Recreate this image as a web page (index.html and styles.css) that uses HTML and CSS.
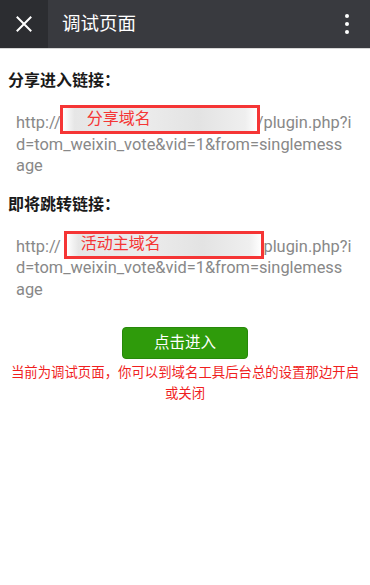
FILE: index.html
```html
<!DOCTYPE html>
<html lang="zh-CN">
<head>
    <meta charset="UTF-8">
    <meta name="viewport" content="width=device-width, initial-scale=1.0">
    <title>调试页面</title>
    <link rel="stylesheet" href="styles.css">
</head>
<body>
    <header class="top-bar">
        <div class="close-btn">
            <svg width="16" height="16" viewBox="0 0 16 16">
                <path d="M1.5 1.5 L14.5 14.5 M14.5 1.5 L1.5 14.5" stroke="#fff" stroke-width="2" stroke-linecap="square"/>
            </svg>
        </div>
        <h1 class="top-title">调试页面</h1>
        <div class="more-btn">
            <span class="dot"></span>
            <span class="dot"></span>
            <span class="dot"></span>
        </div>
    </header>

    <main class="content">
        <h2 class="section-title">分享进入链接：</h2>
        <div class="link-text">
            <div class="link-line">http://<span class="mask"><span class="mask-box mask-box--share"><span class="mask-label">分享域名</span></span></span>/plugin.php?i</div>
            <div class="link-line">d=tom_weixin_vote&amp;vid=1&amp;from=singlemess</div>
            <div class="link-line">age</div>
        </div>

        <h2 class="section-title section-title--next">即将跳转链接：</h2>
        <div class="link-text">
            <div class="link-line">http://<span class="mask"><span class="mask-box mask-box--main"><span class="mask-label">活动主域名</span></span></span>/plugin.php?i</div>
            <div class="link-line">d=tom_weixin_vote&amp;vid=1&amp;from=singlemess</div>
            <div class="link-line">age</div>
        </div>

        <div class="action">
            <a href="#" class="enter-btn">点击进入</a>
        </div>
        <p class="notice">当前为调试页面，你可以到域名工具后台总的设置那边开启或关闭</p>
    </main>
</body>
</html>
```

FILE: styles.css
```css
:root {
    --bar-color: #393a3f;
    --bar-dark: #2c2d31;
    --link-color: #888;
    --mark-red: #f53535;
    --btn-green: #2f9b0b;
}

html, body {
    margin: 0;
    padding: 0;
}

body {
    font-family: Roboto, "Noto Sans CJK SC", sans-serif;
    background: #fff;
    color: #222;
    width: 370px;
}

.top-bar {
    display: flex;
    align-items: center;
    height: 48px;
    background: var(--bar-color);
    border-bottom: 1px solid #d6d6d6;
}

.close-btn {
    width: 48px;
    height: 48px;
    background: var(--bar-dark);
    display: flex;
    align-items: center;
    justify-content: center;
}

.top-title {
    flex: 1;
    margin: 0 0 0 14px;
    font-size: 18.5px;
    font-weight: normal;
    color: #fff;
    line-height: 48px;
}

.more-btn {
    width: 48px;
    height: 48px;
    display: flex;
    flex-direction: column;
    align-items: center;
    justify-content: center;
    gap: 4px;
    margin-right: -1px;
}

.dot {
    width: 4px;
    height: 4px;
    border-radius: 50%;
    background: #fff;
}

.content {
    padding: 0 8px;
}

.section-title {
    margin: 21px 0 0;
    font-size: 16px;
    line-height: 22px;
    font-weight: bold;
    color: #1a1a1a;
}

.section-title--next {
    margin-top: 17px;
}

.link-text {
    margin-top: 20px;
    padding-left: 8px;
    font-size: 16.4px;
    line-height: 21.5px;
    color: var(--link-color);
    white-space: nowrap;
}

.link-line {
    height: 21.5px;
}

.mask {
    display: inline-block;
    position: relative;
    width: 196px;
    height: 16px;
    vertical-align: -2px;
}

.mask-box {
    position: absolute;
    top: -9px;
    left: -1px;
    width: 194px;
    height: 23px;
    border: 3px solid var(--mark-red);
    background: linear-gradient(90deg, #fff 0, #e6e6e6 6%, #ececec 40%, #e3e3e3 70%, #efefef 94%, #fff 100%);
}

.mask-box--main {
    top: -7px;
    left: 3px;
    height: 22px;
}

.mask-label {
    position: absolute;
    left: 24px;
    top: 0;
    font-size: 16px;
    line-height: 22px;
    color: var(--mark-red);
}

.mask-box--main .mask-label {
    left: 14px;
    top: -1px;
}

.action {
    display: flex;
    justify-content: center;
    margin-top: 27px;
}

.enter-btn {
    display: block;
    width: 124px;
    height: 30px;
    line-height: 30px;
    text-align: center;
    background: var(--btn-green);
    border: 1px solid #27880a;
    border-radius: 4px;
    color: #fff;
    font-size: 15.5px;
    text-decoration: none;
}

.notice {
    margin: 3px 0 0;
    text-align: center;
    font-size: 13.4px;
    line-height: 21px;
    color: #f01f1f;
}
```
